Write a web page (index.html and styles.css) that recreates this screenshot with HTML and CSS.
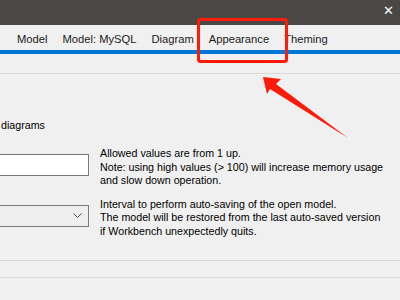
FILE: index.html
```html
<!DOCTYPE html>
<html lang="en">
<head>
  <meta charset="UTF-8">
  <title>Preferences</title>
  <link rel="stylesheet" href="styles.css">
</head>
<body>

  <div class="titlebar">
    <span class="close">&#x2715;</span>
  </div>

  <div class="tabs">
    <span class="tab">Model</span>
    <span class="tab">Model: MySQL</span>
    <span class="tab">Diagram</span>
    <span class="tab">Appearance</span>
    <span class="tab">Theming</span>
  </div>
  <div class="tab-line"></div>

  <div class="header"></div>

  <div class="content">
    <div class="check-label">diagrams</div>

    <div class="row">
      <div class="control"><div class="textbox"></div></div>
      <div class="help">
        Allowed values are from 1 up.<br>
        Note: using high values (&gt; 100) will increase memory usage<br>
        and slow down operation.
      </div>
    </div>

    <div class="row">
      <div class="control">
        <div class="combo">
          <svg class="chevron" width="9" height="5" viewBox="0 0 9 5">
            <path d="M0.5 0.5 L4.5 4.5 L8.5 0.5" fill="none" stroke="#444" stroke-width="1"/>
          </svg>
        </div>
      </div>
      <div class="help">
        Interval to perform auto-saving of the open model.<br>
        The model will be restored from the last auto-saved version<br>
        if Workbench unexpectedly quits.
      </div>
    </div>
  </div>

  <div class="sep first"></div>
  <div class="sep"></div>

  <!-- annotation drawn over the dialog -->
  <svg class="markup" width="400" height="300" viewBox="0 0 400 300">
    <rect x="198.5" y="19.5" width="88" height="42" rx="2" fill="none" stroke="#ff1a0a" stroke-width="3"/>
    <polygon points="263,77 281,79 276,84 348,138 270,89 267,94" fill="#ff1a0a"/>
  </svg>

</body>
</html>
```

FILE: styles.css
```css
body {
  margin: 0;
  width: 400px;
  height: 300px;
  overflow: hidden;
  background: #f0f0f0;
  font-family: "Liberation Sans", Arial, sans-serif;
  font-size: 10.7px;
  color: #000;
  position: relative;
}

.titlebar {
  height: 25px;
  background: #4a4844;
  display: flex;
  justify-content: flex-end;
  align-items: center;
}

.close {
  color: #fff;
  font-size: 13px;
  padding-right: 6px;
  margin-top: -4px;
}

.tabs {
  height: 25px;
  display: flex;
  align-items: center;
  gap: 15px;
  padding-left: 17px;
  padding-top: 3px;
  box-sizing: border-box;
  color: #1a1a1a;
  font-size: 11.2px;
  white-space: nowrap;
}

.tab-line {
  height: 4px;
  background: #0078d7;
}

.header {
  height: 19px;
  border-bottom: 1px solid #d9d9d9;
}

.content {
  padding-top: 44px;
}

.check-label {
  padding-left: 1px;
  line-height: 14px;
}

.row {
  display: flex;
  gap: 11px;
  margin-top: 15px;
}

.row + .row {
  margin-top: 10px;
}

.control {
  width: 89px;
  flex: none;
  padding-top: 7px;
}

.textbox, .combo {
  height: 20px;
  border: 1px solid #7a7a7a;
  border-left: none;
  background: #fff;
}

.combo {
  background: #efefef;
  display: flex;
  justify-content: flex-end;
  align-items: center;
  padding-right: 6px;
}

.help {
  line-height: 13.5px;
  white-space: nowrap;
}

.sep {
  height: 1px;
  background: #dadada;
}

.sep.first {
  margin-top: 22px;
  margin-bottom: 16px;
}

.markup {
  position: absolute;
  left: 0;
  top: 0;
}
```
